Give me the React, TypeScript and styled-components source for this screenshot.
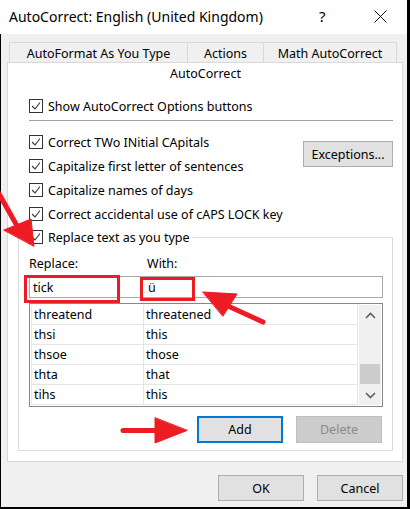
import React from 'react';
import styled, { createGlobalStyle } from 'styled-components';

const OPTIONS = [
  'Correct TWo INitial CApitals',
  'Capitalize first letter of sentences',
  'Capitalize names of days',
  'Correct accidental use of cAPS LOCK key',
];

const ENTRIES = [
  ['threatend', 'threatened'],
  ['thsi', 'this'],
  ['thsoe', 'those'],
  ['thta', 'that'],
  ['tihs', 'this'],
];

const TABS = [
  { label: 'AutoFormat As You Type', width: 179 },
  { label: 'Actions', width: 77 },
  { label: 'Math AutoCorrect', width: 134 },
];

const RED = '#ed1c24';

function Check({ label }: { label: string }) {
  return (
    <CheckRow>
      <Box>
        <svg width="12" height="12" viewBox="0 0 12 12">
          <polyline points="2,6 5,9 10,2.5" fill="none" stroke="#333" strokeWidth="1.1" />
        </svg>
      </Box>
      <span>{label}</span>
    </CheckRow>
  );
}

export default function App() {
  return (
    <>
      <GlobalStyle />
      <Window>
        <TitleBar>
          <Title>AutoCorrect: English (United Kingdom)</Title>
          <Help>?</Help>
          <Close>
            <svg width="13" height="13" viewBox="0 0 13 13">
              <path d="M0.5 0.5 L12.5 12.5 M12.5 0.5 L0.5 12.5" stroke="#111" strokeWidth="1" />
            </svg>
          </Close>
        </TitleBar>
        <Body>
          <TabRow>
            {TABS.map((t) => (
              <Tab key={t.label} $w={t.width}>
                {t.label}
              </Tab>
            ))}
          </TabRow>
          <Panel>
            <ActiveTab>AutoCorrect</ActiveTab>
            <ShowRow>
              <Check label="Show AutoCorrect Options buttons" />
            </ShowRow>
            <Separator />
            <OptionsArea>
              <OptionList>
                {OPTIONS.map((o) => (
                  <Check key={o} label={o} />
                ))}
              </OptionList>
              <Button $w={90} $h={26}>Exceptions...</Button>
            </OptionsArea>
            <Group>
              <Legend>
                <Check label="Replace text as you type" />
              </Legend>
              <FieldLabels>
                <FieldLabel $w={118}>Replace:</FieldLabel>
                <FieldLabel>With:</FieldLabel>
              </FieldLabels>
              <InputBox>
                <InputCell $w={115}>tick</InputCell>
                <InputCell>ü</InputCell>
              </InputBox>
              <ListBox>
                <Rows>
                  {ENTRIES.map(([from, to]) => (
                    <Row key={from}>
                      <Cell $w={113}>{from}</Cell>
                      <Cell>{to}</Cell>
                    </Row>
                  ))}
                </Rows>
                <ScrollBar>
                  <ScrollArrow>
                    <svg width="11" height="7" viewBox="0 0 11 7">
                      <polyline points="1,6 5.5,1.5 10,6" fill="none" stroke="#606060" strokeWidth="1.6" />
                    </svg>
                  </ScrollArrow>
                  <ScrollTrack>
                    <Thumb />
                  </ScrollTrack>
                  <ScrollArrow>
                    <svg width="11" height="7" viewBox="0 0 11 7">
                      <polyline points="1,1 5.5,5.5 10,1" fill="none" stroke="#606060" strokeWidth="1.6" />
                    </svg>
                  </ScrollArrow>
                </ScrollBar>
              </ListBox>
              <GroupButtons>
                <Button $w={86} $h={27} $focused>Add</Button>
                <Button $w={86} $h={27} $disabled>Delete</Button>
              </GroupButtons>
            </Group>
          </Panel>
          <DialogButtons>
            <Button $w={86} $h={26}>OK</Button>
            <Button $w={86} $h={26}>Cancel</Button>
          </DialogButtons>
        </Body>

        {/* red call-outs drawn on top of the dialog */}
        <Marks width="410" height="509" viewBox="0 0 410 509">
          <rect x="25.5" y="276.5" width="93" height="25" fill="none" stroke={RED} strokeWidth="3" />
          <rect x="141.5" y="278.5" width="52" height="21" fill="none" stroke={RED} strokeWidth="3" />
          <g fill={RED} stroke={RED} strokeLinecap="round" strokeLinejoin="round">
            <line x1="-2" y1="192" x2="16" y2="224" strokeWidth="5" />
            <polygon points="4,230 31,219 34,246" strokeWidth="1" />
            <line x1="263" y1="322" x2="228" y2="306" strokeWidth="5" />
            <polygon points="203,292 237,294 223,316" strokeWidth="1" />
            <line x1="123" y1="430.5" x2="160" y2="430.5" strokeWidth="5" />
            <polygon points="155,418 155,443 187,430.5" strokeWidth="1" />
          </g>
        </Marks>
      </Window>
    </>
  );
}

const GlobalStyle = createGlobalStyle`
  html, body {
    margin: 0;
    padding: 0;
    background: #ffffff;
  }
  * {
    box-sizing: border-box;
  }
  body {
    font-family: 'Noto Sans', 'Open Sans', sans-serif;
    font-size: 12.5px;
    color: #000;
  }
`;

const Window = styled.div`
  position: relative;
  width: 410px;
  height: 509px;
  display: flex;
  flex-direction: column;
  overflow: hidden;
`;

const TitleBar = styled.div`
  height: 34px;
  flex-shrink: 0;
  display: flex;
  align-items: center;
  background: #fff;
  padding-left: 9px;
  border-right: 3px solid #000;
`;

const Title = styled.div`
  flex: 1;
  font-size: 14px;
  margin-top: -2px;
`;

const Help = styled.div`
  width: 55px;
  font-size: 15px;
  text-align: left;
  margin-top: -2px;
`;

const Close = styled.div`
  width: 33px;
  display: flex;
  align-items: center;
  margin-top: -2px;
`;

const Body = styled.div`
  flex: 1;
  background: #f0f0f0;
  border-left: 1px solid #000;
  border-right: 3px solid #000;
  border-bottom: 2px solid #000;
  padding: 8px 4px 0 6px;
  display: flex;
  flex-direction: column;
`;

const TabRow = styled.div`
  display: flex;
  height: 20px;
  margin-left: 2px;
`;

const Tab = styled.div<{ $w: number }>`
  width: ${(p) => p.$w}px;
  border: 1px solid #d9d9d9;
  border-bottom: none;
  margin-right: -1px;
  display: flex;
  align-items: center;
  justify-content: center;
  padding-top: 1px;
`;

const Panel = styled.div`
  height: 400px;
  background: #fff;
  border: 1px solid #d9d9d9;
  padding: 0 9px 0 10px;
  display: flex;
  flex-direction: column;
`;

const ActiveTab = styled.div`
  height: 22px;
  display: flex;
  align-items: center;
  justify-content: center;
  padding-bottom: 1px;
`;

const ShowRow = styled.div`
  margin-top: 9px;
  padding-left: 11px;
`;

const CheckRow = styled.div`
  height: 24px;
  display: flex;
  align-items: center;
  gap: 5px;
  white-space: nowrap;
`;

const Box = styled.span`
  width: 14px;
  height: 14px;
  border: 1px solid #333;
  background: #fff;
  display: flex;
  align-items: center;
  justify-content: center;
  flex-shrink: 0;
`;

const Separator = styled.div`
  height: 1px;
  background: #a0a0a0;
  margin: 2px 0 0 11px;
`;

const OptionsArea = styled.div`
  display: flex;
  justify-content: space-between;
  align-items: flex-start;
  margin-top: 9px;
  padding-left: 11px;

  > button {
    margin-top: 11px;
  }
`;

const OptionList = styled.div`
  display: flex;
  flex-direction: column;
`;

const Group = styled.fieldset`
  margin: 0;
  border: 1px solid #dcdcdc;
  padding: 0 9px 7px 8px;
  min-width: 0;
`;

const Legend = styled.legend`
  padding: 0 2px;
  height: 22px;

  > div {
    height: 22px;
  }
`;

const FieldLabels = styled.div`
  display: flex;
  height: 16px;
  margin-top: 7px;
  padding-left: 2px;
  align-items: center;
`;

const FieldLabel = styled.div<{ $w?: number }>`
  width: ${(p) => (p.$w ? `${p.$w}px` : 'auto')};
`;

const InputBox = styled.div`
  margin: 5px 0 0 2px;
  height: 22px;
  border: 1px solid #a9a9a9;
  display: flex;
  align-items: center;
  padding-left: 3px;
`;

const InputCell = styled.div<{ $w?: number }>`
  width: ${(p) => (p.$w ? `${p.$w}px` : 'auto')};
`;

const ListBox = styled.div`
  margin: 5px 0 0 2px;
  height: 104px;
  border: 1px solid #828790;
  padding: 1px;
  display: flex;
`;

const Rows = styled.div`
  flex: 1;
  display: flex;
  flex-direction: column;
`;

const Row = styled.div`
  height: 20px;
  display: flex;
  border-bottom: 1px solid #e5e5e5;
`;

const Cell = styled.div<{ $w?: number }>`
  width: ${(p) => (p.$w ? `${p.$w}px` : 'auto')};
  flex: ${(p) => (p.$w ? 'none' : '1')};
  border-right: 1px solid #e5e5e5;
  border-left: ${(p) => (p.$w ? '1px solid #e5e5e5' : 'none')};
  padding-left: 2px;
  display: flex;
  align-items: center;
`;

const ScrollBar = styled.div`
  width: 22px;
  background: #f0f0f0;
  display: flex;
  flex-direction: column;
  margin-left: 1px;
`;

const ScrollArrow = styled.div`
  height: 20px;
  display: flex;
  align-items: center;
  justify-content: center;
`;

const ScrollTrack = styled.div`
  flex: 1;
  display: flex;
  flex-direction: column;
  justify-content: flex-end;
  padding: 0 1px 1px;
`;

const Thumb = styled.div`
  height: 20px;
  background: #cdcdcd;
`;

const GroupButtons = styled.div`
  display: flex;
  justify-content: flex-end;
  gap: 13px;
  margin-top: 9px;
  padding-right: 1px;
`;

const Button = styled.button<{ $w: number; $h: number; $focused?: boolean; $disabled?: boolean }>`
  width: ${(p) => p.$w}px;
  height: ${(p) => p.$h}px;
  font-family: inherit;
  font-size: 12.5px;
  color: ${(p) => (p.$disabled ? '#8a8a8a' : '#000')};
  background: ${(p) => (p.$disabled ? '#cccccc' : '#e1e1e1')};
  border: ${(p) => (p.$focused ? '2px solid #0078d7' : p.$disabled ? '1px solid #bfbfbf' : '1px solid #adadad')};
  padding: 0;
  flex-shrink: 0;
`;

const DialogButtons = styled.div`
  display: flex;
  justify-content: flex-end;
  gap: 13px;
  margin-top: 13px;
`;

const Marks = styled.svg`
  position: absolute;
  left: 0;
  top: 0;
  pointer-events: none;
  overflow: visible;
`;
